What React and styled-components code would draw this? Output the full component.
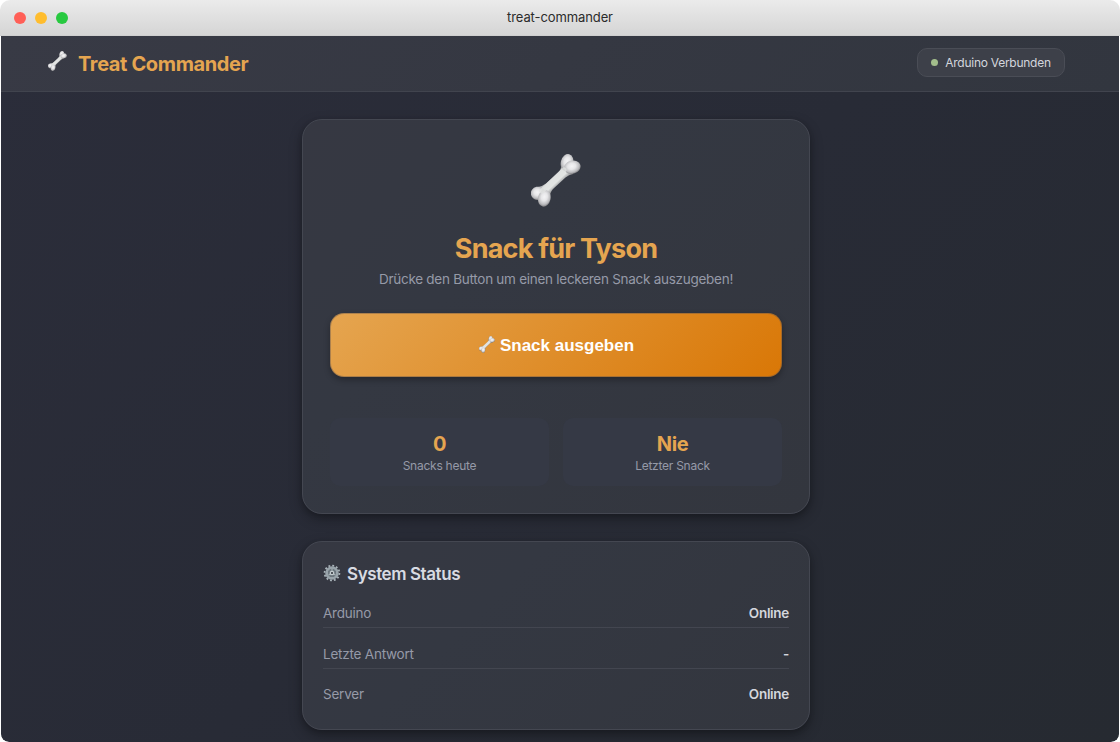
import React, { useId } from 'react';
import styled, { createGlobalStyle } from 'styled-components';

const GlobalStyle = createGlobalStyle`
  * { box-sizing: border-box; }
  body { margin: 0; background: #fff; font-family: Inter, 'Liberation Sans', sans-serif; }
  h1, h2, h3, p { margin: 0; }
`;

const Window = styled.div`
  width: 1120px;
  height: 742px;
  overflow: hidden;
  border-radius: 10px 10px 9px 9px;
`;

const TitleBar = styled.div`
  height: 36px;
  padding: 0 13px;
  display: grid;
  grid-template-columns: 80px 1fr 80px;
  align-items: center;
  background: linear-gradient(#ebebeb, #d5d5d5);
  border-bottom: 1px solid #cfcfcf;
`;

const Lights = styled.div`
  display: flex;
  gap: 7px;
`;

const Light = styled.span`
  width: 14px;
  height: 14px;
  border-radius: 50%;
  border: 0.5px solid transparent;
  background: ${(p) => p.$color};
  background-clip: padding-box;
`;

const WindowTitle = styled.div`
  padding-bottom: 1px;
  text-align: center;
  font: 400 13px/18px Inter, sans-serif;
  letter-spacing: -0.1px;
  color: #2b2b2b;
`;

const Page = styled.div`
  height: 706px;
  margin: 0 1px;
  border-radius: 0 0 8px 8px;
  overflow: hidden;
  background: linear-gradient(135deg, #2b2d3a 0%, #282b36 50%, #262a31 100%);
`;

const Header = styled.header`
  height: 56px;
  padding: 0 54px 2px 47px;
  display: flex;
  align-items: center;
  justify-content: space-between;
  border-bottom: 1px solid #41444e;
  background: linear-gradient(135deg, #383a45, #32363f);
`;

const Brand = styled.div`
  display: flex;
  align-items: flex-start;
  gap: 11px;
`;

const BrandName = styled.h1`
  padding-top: 2px;
  font-size: 20px;
  line-height: 28px;
  font-weight: 700;
  letter-spacing: -0.37px;
  color: #e5a550;
`;

const StatusPill = styled.div`
  height: 29px;
  width: 148px;
  display: flex;
  align-items: center;
  justify-content: center;
  gap: 7px;
  border: 1px solid #4a4d56;
  border-radius: 10px;
  background: #3d4049;
  color: #d3d6dd;
  font-size: 12px;
  letter-spacing: -0.26px;
  white-space: nowrap;
`;

const Dot = styled.span`
  width: 7px;
  height: 7px;
  border-radius: 50%;
  background: #a3be8c;
`;

const Main = styled.main`
  width: 508px;
  margin: 27px auto 0 301px;
  display: flex;
  flex-direction: column;
  gap: 27px;
`;

const Card = styled.section`
  border: 1px solid #444751;
  border-radius: 20px;
  background: linear-gradient(135deg, #363842 0%, #343842 35%, #33363e 100%);
  box-shadow: 0 5px 13px rgba(0, 0, 0, 0.3), 0 2px 5px rgba(0, 0, 0, 0.15);
`;

const FeedCard = styled(Card)`
  height: 395px;
  padding: 34px 27px 27px;
  display: flex;
  flex-direction: column;
  align-items: center;
`;

const FeedTitle = styled.h2`
  margin-top: 24px;
  font-size: 27px;
  line-height: 36px;
  font-weight: 700;
  letter-spacing: -0.78px;
  color: #e5a550;
`;

const FeedText = styled.p`
  margin-top: 3px;
  font-size: 13.5px;
  line-height: 18px;
  letter-spacing: -0.27px;
  color: #969aa8;
`;

const FeedButton = styled.button`
  width: 100%;
  height: 64px;
  margin-top: 25px;
  padding: 2px 0 0 1px;
  flex: none;
  display: flex;
  align-items: center;
  justify-content: center;
  gap: 5px;
  border: 1px solid rgba(90, 80, 80, 0.4);
  border-radius: 14px;
  background: linear-gradient(135deg, #e5a550, #d97706) border-box;
  box-shadow: 0 3px 6px rgba(0, 0, 0, 0.3);
  color: #fff;
  font: 700 17px/20px 'Liberation Sans', Arial, sans-serif;
`;

const ButtonIcon = styled.span`
  display: flex;
  padding-bottom: 3px;
`;

const Stats = styled.div`
  width: 100%;
  margin-top: 41px;
  display: grid;
  grid-template-columns: 1fr 1fr;
  gap: 14px;
`;

const Stat = styled.div`
  height: 68px;
  padding-top: 13px;
  border-radius: 10px;
  background: #353945;
  text-align: center;
`;

const StatValue = styled.div`
  font-size: 20px;
  line-height: 27px;
  font-weight: 700;
  letter-spacing: -0.4px;
  color: #e5a550;
`;

const StatLabel = styled.div`
  font-size: 12px;
  line-height: 15px;
  letter-spacing: -0.25px;
  color: #969aa8;
`;

const StatusCard = styled(Card)`
  height: 189px;
  padding: 20px;
`;

const StatusHeading = styled.h3`
  display: flex;
  align-items: center;
  gap: 6px;
  height: 24px;
  font-size: 17px;
  font-weight: 600;
  letter-spacing: -0.42px;
  color: #d8dbe2;
`;

const HeadingIcon = styled.span`
  display: flex;
  padding-bottom: 3px;
`;

const StatusRow = styled.div`
  height: ${(p) => (p.$first ? 42 : 40.5)}px;
  padding-bottom: 5px;
  display: flex;
  align-items: flex-end;
  justify-content: space-between;
  border-bottom: 1px solid ${(p) => (p.$last ? 'transparent' : '#434650')};
  font-size: 13.5px;
  line-height: 18px;
  letter-spacing: -0.22px;
  color: #969aa8;
`;

const StatusValue = styled.span`
  font-weight: 600;
  letter-spacing: -0.3px;
  color: #d3d6dd;
`;

function Bone({ width, height }) {
  const id = useId();
  const lobe = `url(#${id}lobe)`;
  return (
    <svg width={width} height={height} viewBox="0 0 50 53" aria-hidden="true">
      <defs>
        <radialGradient id={`${id}lobe`} cx=".48" cy=".42" r=".6">
          <stop offset="0" stopColor="#f4f4f6" />
          <stop offset=".4" stopColor="#e6e6e8" />
          <stop offset=".75" stopColor="#bcbcbf" />
          <stop offset="1" stopColor="#77777a" />
        </radialGradient>
        <linearGradient id={`${id}shaft`} x1="20" y1="21.5" x2="29" y2="31" gradientUnits="userSpaceOnUse">
          <stop offset="0" stopColor="#a8a9ac" />
          <stop offset=".35" stopColor="#dfe1e0" />
          <stop offset=".65" stopColor="#e3e5e4" />
          <stop offset="1" stopColor="#8d8e91" />
        </linearGradient>
      </defs>
      <path
        d="M30 10Q31 15 27 18.5L15 29.5Q12 32 7 33L9 42L18.8 44Q19 38 22 35L34.5 23.5Q38 20.5 42 20L41 12L34 9Z"
        fill={`url(#${id}shaft)`}
      />
      <ellipse cx="36" cy="8.5" rx="6.2" ry="8.6" transform="rotate(15 36 8.5)" fill={lobe} />
      <ellipse cx="6.8" cy="39.3" rx="7" ry="6.6" transform="rotate(-12 6.8 39.3)" fill={lobe} />
      <ellipse cx="41.3" cy="13.2" rx="8.4" ry="6.6" transform="rotate(-15 41.3 13.2)" fill={lobe} />
      <ellipse cx="13.3" cy="44.2" rx="6.3" ry="8.5" transform="rotate(12 13.3 44.2)" fill={lobe} />
      <path d="M33 16L11 37" stroke="#e2e4e3" strokeWidth="5" strokeLinecap="round" opacity=".8" />
    </svg>
  );
}

function Gear() {
  return (
    <svg width="18" height="18" viewBox="0 0 18 18" aria-hidden="true">
      <circle cx="9" cy="9" r="7.4" fill="none" stroke="#a9b3b9" strokeWidth="1.8" strokeDasharray="1.9 1.975" />
      <circle cx="9" cy="9" r="5.3" fill="none" stroke="#98a3aa" strokeWidth="3" />
      <circle cx="9" cy="9" r="4" fill="#6e7981" />
      <path d="M9 9V5M9 9L5.5 11M9 9L12.5 11" stroke="#a8b2b7" strokeWidth="1.1" />
      <circle cx="9" cy="9" r="2.3" fill="#c4cccf" />
      <circle cx="9" cy="9" r="1.1" fill="#343a42" />
    </svg>
  );
}

const rows = [
  ['Arduino', 'Online'],
  ['Letzte Antwort', '-'],
  ['Server', 'Online'],
];

export default function App() {
  return (
    <>
      <GlobalStyle />
      <Window>
        <TitleBar>
          <Lights>
            <Light $color="#ff5f57" />
            <Light $color="#ffbd2e" />
            <Light $color="#28c940" />
          </Lights>
          <WindowTitle>treat-commander</WindowTitle>
        </TitleBar>
        <Page>
          <Header>
            <Brand>
              <Bone width={19} height={26} />
              <BrandName>Treat Commander</BrandName>
            </Brand>
            <StatusPill>
              <Dot />
              Arduino Verbunden
            </StatusPill>
          </Header>
          <Main>
            <FeedCard>
              <Bone width={50} height={53} />
              <FeedTitle>Snack für Tyson</FeedTitle>
              <FeedText>Drücke den Button um einen leckeren Snack auszugeben!</FeedText>
              <FeedButton>
                <ButtonIcon>
                  <Bone width={16} height={17} />
                </ButtonIcon>
                Snack ausgeben
              </FeedButton>
              <Stats>
                <Stat>
                  <StatValue>0</StatValue>
                  <StatLabel>Snacks heute</StatLabel>
                </Stat>
                <Stat>
                  <StatValue>Nie</StatValue>
                  <StatLabel>Letzter Snack</StatLabel>
                </Stat>
              </Stats>
            </FeedCard>
            <StatusCard>
              <StatusHeading>
                <HeadingIcon>
                  <Gear />
                </HeadingIcon>
                System Status
              </StatusHeading>
              {rows.map(([label, value], i) => (
                <StatusRow key={label} $first={i === 0} $last={i === rows.length - 1}>
                  <span>{label}</span>
                  <StatusValue>{value}</StatusValue>
                </StatusRow>
              ))}
            </StatusCard>
          </Main>
        </Page>
      </Window>
    </>
  );
}
